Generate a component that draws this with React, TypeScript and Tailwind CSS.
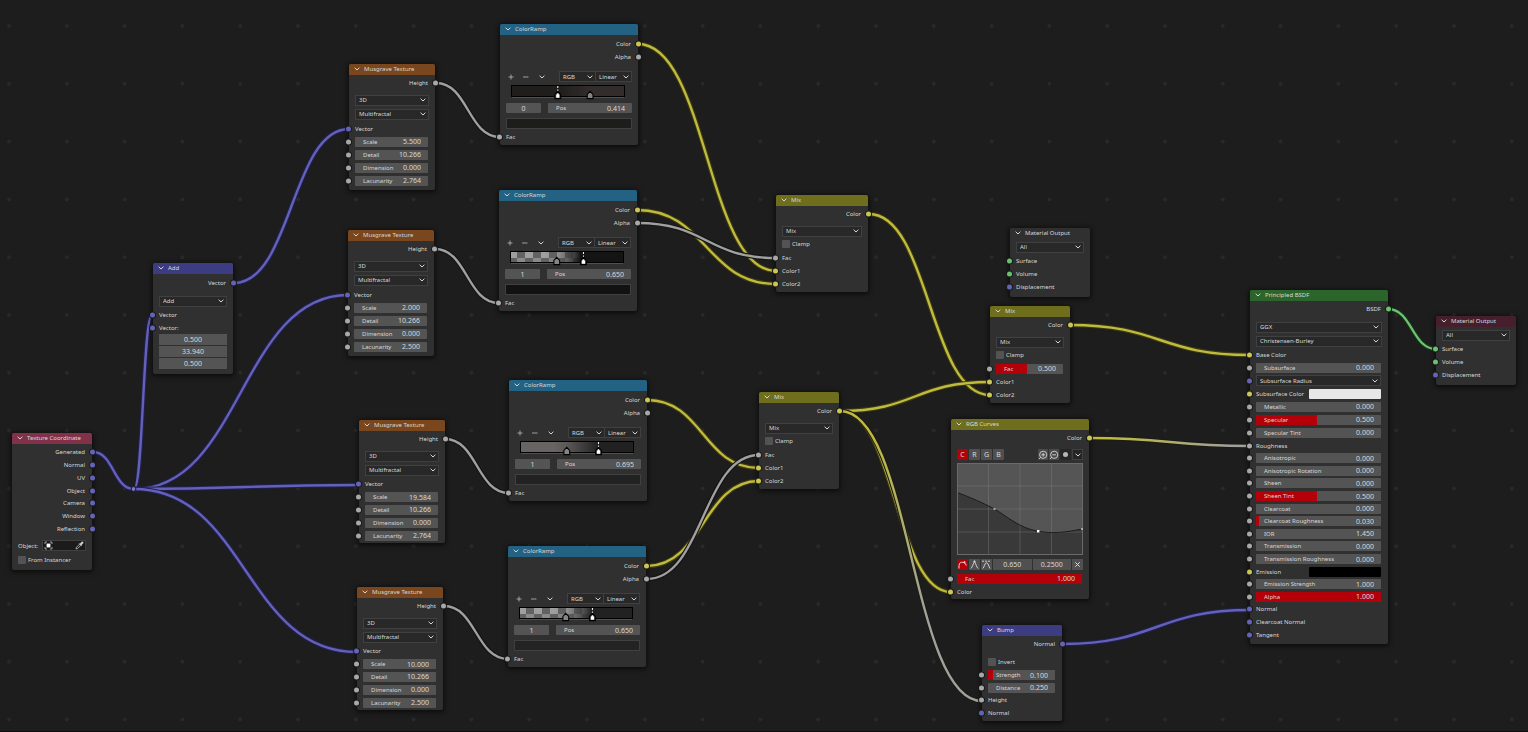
import { useId, type ReactNode } from "react";
import clsx from "clsx";

const SOCKET = {
  vector: "bg-[#6563b8]",
  value: "bg-[#a8a8a8]",
  color: "bg-[#cbc653]",
  shader: "bg-[#6ac06e]",
};

const HEADER = {
  input: "bg-[#83314a]",
  vector: "bg-[#3c3c83]",
  texture: "bg-[#79461d]",
  converter: "bg-[#246283]",
  color: "bg-[#6e6e1d]",
  shader: "bg-[#2b652b]",
  output: "bg-[#45202c]",
  none: "bg-[#303030]",
};

type SocketType = keyof typeof SOCKET;

const Chevron = ({ className }: { className?: string }) => (
  <svg viewBox="0 0 6 4" className={clsx("h-1 w-1.5 shrink-0", className)} fill="none" stroke="#d6d6d6" strokeWidth="1">
    <path d="M0.6 0.7 3 3 5.4 0.7" />
  </svg>
);

const Socket = ({ type, side }: { type: SocketType; side: "left" | "right" }) => (
  <span
    className={clsx(
      "absolute top-1/2 size-[5px] -translate-y-1/2 rounded-full ring-1 ring-[#1a1a1a]",
      side === "left" ? "-left-[3px]" : "-right-[3px]",
      SOCKET[type]
    )}
  />
);

const Node = ({ title, kind, className, children }: { title: string; kind: keyof typeof HEADER; className: string; children: ReactNode }) => (
  <section className={clsx("absolute rounded-[2px] bg-[#303030] shadow-[0_1px_5px_1px_rgba(0,0,0,0.65)]", className)}>
    <header className={clsx("flex h-[11px] items-center gap-1 rounded-t-[2px] pb-px pl-[5px]", HEADER[kind])}>
      <Chevron />
      <h2>{title}</h2>
    </header>
    {children}
  </section>
);

// one line of a node, with an optional socket on its edge
const Row = ({ socket, out, children }: { socket?: SocketType; out?: boolean; children: ReactNode }) => (
  <div className={clsx("relative flex h-[13px] min-h-0 shrink items-center pr-[7px] pl-1.5", out && "justify-end")}>
    {socket && <Socket type={socket} side={out ? "right" : "left"} />}
    {children}
  </div>
);

const Output = ({ name, type }: { name: string; type: SocketType }) => (
  <Row socket={type} out>{name}</Row>
);

const Select = ({ label, value, className }: { label: string; value: string; className?: string }) => (
  <span className={clsx("relative flex h-[11px] items-center border border-[#404040] bg-[#282828]", className)}>
    <select aria-label={label} defaultValue={value} className="h-full w-full appearance-none bg-transparent pl-[3px] outline-none">
      <option>{value}</option>
    </select>
    <Chevron className="pointer-events-none absolute right-0.5" />
  </span>
);

const SelectRow = ({ label, value }: { label: string; value: string }) => (
  <div className="flex h-3.5 items-center pr-1.5 pl-1.5">
    <Select label={label} value={value} className="flex-1" />
  </div>
);

// slider style number field, fill goes from 0 to 1
const Slider = ({ name, value, fill = 0 }: { name: string; value: string; fill?: number }) => {
  const id = useId();
  return (
    <div className="relative flex h-[10px] min-w-0 flex-1 items-center overflow-hidden rounded-[1px] bg-[#545454] pr-[7px] pl-2">
      {fill > 0 && <span className="absolute inset-y-0 left-0 bg-[#b30009]" style={{ width: `${fill * 100}%` }} />}
      <label htmlFor={id} className="relative shrink-0">{name}</label>
      <input id={id} defaultValue={value} className="relative h-full w-0 min-w-0 flex-1 bg-transparent text-right text-[7px] outline-none" />
    </div>
  );
};

const SliderRow = ({ name, value, fill, socket = "value" }: { name: string; value: string; fill?: number; socket?: SocketType }) => (
  <Row socket={socket}>
    <Slider name={name} value={value} fill={fill} />
  </Row>
);

const CheckRow = ({ name }: { name: string }) => (
  <div className="flex h-3 items-center pl-1.5">
    <label className="flex items-center gap-0.5">
      <input type="checkbox" className="size-2 appearance-none rounded-[1px] bg-[#535353]" />
      {name}
    </label>
  </div>
);

const Musgrave = ({ className, values, compact }: { className: string; values: string[]; compact?: boolean }) => (
  <Node title="Musgrave Texture" kind="texture" className={clsx("w-[86px]", compact ? "pb-px" : "pb-[3px]", className)}>
    <div className="pt-px pb-1">
      <Output name="Height" type="value" />
    </div>
    <SelectRow label="Dimensions" value="3D" />
    <SelectRow label="Type" value="Multifractal" />
    <div className={clsx("flex flex-col pt-px", compact && "h-[65px]")}>
      <Row socket="vector">Vector</Row>
      {["Scale", "Detail", "Dimension", "Lacunarity"].map((name, i) => (
        <SliderRow key={name} name={name} value={values[i]} />
      ))}
    </div>
  </Node>
);

type Ramp = {
  id: string;
  index: string;
  pos: string;
  stops: [number, string, number][];
  checker?: boolean;
  handles: [number, boolean][];
  swatch: string;
};

const RampBar = ({ ramp }: { ramp: Ramp }) => (
  <svg width="114" height="15" className="block" aria-hidden="true">
    <defs>
      <pattern id={`${ramp.id}-check`} width="16" height="11" patternUnits="userSpaceOnUse">
        <rect width="16" height="11" fill="#626262" />
        <rect y="1" width="7" height="6" fill="#a09f9d" />
        <rect x="15" y="1" width="1" height="6" fill="#a09f9d" />
        <rect x="7" y="7" width="8" height="4" fill="#8a8988" />
      </pattern>
      <linearGradient id={`${ramp.id}-ramp`}>
        {ramp.stops.map(([offset, color, opacity]) => (
          <stop key={offset} offset={offset} stopColor={color} stopOpacity={opacity} />
        ))}
      </linearGradient>
    </defs>
    {ramp.checker && <rect x="1" y="1" width="112" height="10" fill={`url(#${ramp.id}-check)`} />}
    <rect x="0.5" y="0.5" width="113" height="11" fill={`url(#${ramp.id}-ramp)`} stroke="#000" />
    <path d="M1 12.5H113" stroke="#666" strokeWidth="0.6" />
    {ramp.handles.map(([at, active]) => (
      <g key={at} transform={`translate(${at * 113} 0)`}>
        {active && <path d="M0 1V7" stroke="#fff" strokeDasharray="2 1.5" />}
        <path d="M-2.9 13.6V9.4L0 6.4 2.9 9.4V13.6Z" fill={active ? "#4a4a4a" : "#858585"} stroke="#000" strokeWidth="1.1" />
        {active && <path d="M-1.6 12.8V10L0 8 1.6 10V12.8Z" fill="#fff" />}
      </g>
    ))}
  </svg>
);

const ColorRamp = ({ className, ramp }: { className: string; ramp: Ramp }) => (
  <Node title="ColorRamp" kind="converter" className={clsx("w-[138px] pb-0.5", className)}>
    <div className="pt-0.5">
      <Output name="Color" type="color" />
      <Output name="Alpha" type="value" />
    </div>
    <div className="mt-2 flex h-[11px] items-center pr-1.5 pl-2">
      <button aria-label="Add stop" className="flex h-full w-[7px] items-center">
        <svg width="6" height="6" stroke="#bbb" strokeWidth="0.8"><path d="M0.5 3H5.5M3 0.5V5.5" /></svg>
      </button>
      <button aria-label="Remove stop" className="ml-2 flex h-full w-[7px] items-center">
        <svg width="6" height="6" stroke="#bbb" strokeWidth="0.8"><path d="M0 3H5.5" /></svg>
      </button>
      <button aria-label="Tools" className="ml-[9px] flex h-full w-[7px] items-center">
        <Chevron />
      </button>
      <span className="flex flex-1 pl-[13px]">
        <Select label="Color mode" value="RGB" className="w-[37px]" />
        <Select label="Interpolation" value="Linear" className="flex-1 border-l-0" />
      </span>
    </div>
    <div className="pt-[3px] pl-[11px]">
      <RampBar ramp={ramp} />
    </div>
    <div className="mt-[3px] flex gap-[7px] pr-1.5 pl-1.5">
      <input aria-label="Stop index" defaultValue={ramp.index} className="h-[10px] w-[35px] rounded-[1px] bg-[#545454] text-center text-[7px] outline-none" />
      <Slider name="Pos" value={ramp.pos} />
    </div>
    <div className="mt-[5px] mb-px flex pr-1.5 pl-1.5">
      <button aria-label="Stop color" className={clsx("h-[11px] flex-1 border border-[#404040]", ramp.swatch)} />
    </div>
    <Row socket="value">Fac</Row>
  </Node>
);

const Mix = ({ className, fac }: { className: string; fac?: string }) => (
  <Node title="Mix" kind="color" className={clsx("pb-0.5", className)}>
    <div className="pt-px pb-1">
      <Output name="Color" type="color" />
    </div>
    <SelectRow label="Blend mode" value="Mix" />
    <CheckRow name="Clamp" />
    <div className="pt-px">
      {fac ? <SliderRow name="Fac" value={fac} fill={0.47} /> : <Row socket="value">Fac</Row>}
      <Row socket="color">Color1</Row>
      <Row socket="color">Color2</Row>
    </div>
  </Node>
);

const MaterialOutput = ({ className, kind }: { className: string; kind: "output" | "none" }) => (
  <Node title="Material Output" kind={kind} className={clsx("w-20 pb-1", className)}>
    <div className="pt-px">
      <SelectRow label="Target" value="All" />
    </div>
    <Row socket="shader">Surface</Row>
    <Row socket="shader">Volume</Row>
    <Row socket="vector">Displacement</Row>
  </Node>
);

const TextureCoordinate = () => (
  <Node title="Texture Coordinate" kind="input" className="top-[433px] left-3 w-20 pb-1">
    <div className="flex h-[91px] flex-col pt-0.5">
      {["Generated", "Normal", "UV", "Object", "Camera", "Window", "Reflection"].map((name) => (
        <Output key={name} name={name} type="vector" />
      ))}
    </div>
    <div className="mt-[5px] flex h-[11px] items-center justify-between pr-1.5 pl-1.5">
      <span>Object:</span>
      <button aria-label="Pick object" className="flex h-[11px] w-11 items-center justify-between border border-[#404040] bg-[#1b1b1b] px-px">
        <svg width="9" height="9" fill="none" stroke="#bdbdbd" strokeWidth="0.8">
          <path d="M1 3V1H3M6 1H8V3M8 6V8H6M3 8H1V6" />
          <rect x="2.6" y="2.6" width="3.8" height="3.8" fill="#fff" stroke="none" />
        </svg>
        <svg width="9" height="9" fill="none" stroke="#c8c8c8" strokeWidth="1">
          <path d="M1 8 1.5 6.3 4.6 3.2 5.8 4.4 2.7 7.5Z" strokeWidth="0.8" />
          <path d="M4.2 2.4 6.6 4.8" />
          <path d="M5.8 3.2 7.4 1.6" strokeWidth="2.2" strokeLinecap="round" />
        </svg>
      </button>
    </div>
    <div className="pt-[3px]">
      <CheckRow name="From Instancer" />
    </div>
  </Node>
);

const VectorAdd = () => (
  <Node title="Add" kind="vector" className="top-[263px] left-[153px] w-20 pb-[5px]">
    <div className="pt-0.5 pb-[5px]">
      <Output name="Vector" type="vector" />
    </div>
    <SelectRow label="Operation" value="Add" />
    <Row socket="vector">Vector</Row>
    <Row socket="vector">Vector:</Row>
    <div className="flex flex-col gap-px pr-1.5 pl-1.5">
      {["0.500", "33.940", "0.500"].map((value, i) => (
        <input key={i} aria-label={`Vector ${"XYZ"[i]}`} defaultValue={value} className="h-[11px] w-full bg-[#545454] text-center text-[7px] outline-none" />
      ))}
    </div>
  </Node>
);

const CurveGraph = () => (
  <svg width="126" height="92" className="block" aria-label="Curve">
    <rect width="126" height="92" fill="#555" />
    <path d="M0 29.5C13 34 26 40 37.5 46C48 52 62 65 81 68.3C94 70.5 110 69.5 126 65.8V92H0Z" fill="#393939" />
    <path d="M31.5 0V92M63 0V92M94.5 0V92M0 23H126M0 46H126M0 69H126" stroke="#888" strokeOpacity="0.35" fill="none" />
    <path d="M0 29.5C13 34 26 40 37.5 46C48 52 62 65 81 68.3C94 70.5 110 69.5 126 65.8" stroke="#1c1c1c" fill="none" />
    <rect x="0.5" y="0.5" width="125" height="91" fill="none" stroke="#6a6a6a" />
    <rect x="36.5" y="45" width="2" height="2" fill="#aaa" />
    <rect x="80" y="67" width="2.4" height="2.4" fill="#fff" />
    <rect x="124" y="65" width="2" height="2" fill="#aaa" />
  </svg>
);

const ZoomIcon = ({ plus }: { plus?: boolean }) => (
  <svg width="10" height="10" fill="none" stroke="#d8d8d8" strokeWidth="0.9">
    <circle cx="5.2" cy="4.8" r="3.6" />
    <path d="M3.3 4.8H7.1M2.6 7.4 1 9" />
    {plus && <path d="M5.2 2.9V6.7" />}
  </svg>
);

const RgbCurves = () => (
  <Node title="RGB Curves" kind="color" className="top-[419px] left-[951px] w-[138px] pb-px">
    <div className="pt-px pb-[5px]">
      <Output name="Color" type="color" />
    </div>
    <div className="flex justify-between pr-1.5 pl-1.5">
      <div className="flex h-[11px] gap-px">
        {["C", "R", "G", "B"].map((channel) => (
          <button key={channel} className={clsx("w-[11px] rounded-[1px] text-[7px] leading-none", channel === "C" ? "bg-[#b30009]" : "bg-[#505050]")}>
            {channel}
          </button>
        ))}
      </div>
      <div className="flex h-[11px] gap-px">
        <button aria-label="Zoom in" className="bg-[#4a4a4a]"><ZoomIcon plus /></button>
        <button aria-label="Zoom out" className="bg-[#4a4a4a]"><ZoomIcon /></button>
        <button aria-label="Clipping" className="flex w-[11px] items-center justify-center bg-[#252525]">
          <span className="size-[5px] rounded-full bg-[#b5b5b5]" />
        </button>
        <button aria-label="Curve tools" className="flex w-[11px] items-center justify-center border border-[#404040] bg-[#252525]"><Chevron /></button>
      </div>
    </div>
    <div className="pt-[3px] pl-1.5">
      <CurveGraph />
    </div>
    <div className="mt-1 mb-0.5 flex h-[11px] gap-px pr-1.5 pl-1.5">
      <button aria-label="Auto handle" className="w-[11px] rounded-l-[1px] bg-[#b30009]">
        <svg width="11" height="11" fill="none" stroke="#eee" strokeWidth="0.9"><path d="M2 9.5V6.5C2.5 3.5 4 3 5.5 3.4S8.5 3.5 9.3 6.5" /><circle cx="7.5" cy="3.2" r="0.7" /></svg>
      </button>
      <button aria-label="Vector handle" className="w-[11px] bg-[#505050]">
        <svg width="11" height="11" fill="none" stroke="#ddd" strokeWidth="0.9"><path d="M1.8 9.5C3.8 8 4 4.5 5.5 2.5C7 4.5 7.2 8 9.2 9.5" /><circle cx="5.5" cy="2.4" r="0.7" /></svg>
      </button>
      <button aria-label="Auto clamped handle" className="w-[11px] bg-[#505050]">
        <svg width="11" height="11" fill="none" stroke="#ddd" strokeWidth="0.9"><path d="M1 2.2H10" strokeDasharray="2 1" /><path d="M1.8 9.5C3.5 8 3.5 3.8 5.5 3.8S7.5 8 9.2 9.5" /></svg>
      </button>
      <input aria-label="Point X" defaultValue="0.650" className="w-0 flex-1 bg-[#505050] text-center text-[7px] outline-none" />
      <input aria-label="Point Y" defaultValue="0.2500" className="w-0 flex-1 bg-[#505050] text-center text-[7px] outline-none" />
      <button aria-label="Delete point" className="w-[11px] bg-[#505050]">
        <svg width="11" height="11" fill="none" stroke="#ddd" strokeWidth="1"><path d="M3.3 3.3 7.7 7.7M7.7 3.3 3.3 7.7" /></svg>
      </button>
    </div>
    <SliderRow name="Fac" value="1.000" fill={1} />
    <Row socket="color">Color</Row>
  </Node>
);

const Bump = () => (
  <Node title="Bump" kind="vector" className="top-[625px] left-[982px] w-20 pb-0.5">
    <div className="pt-px pb-1.5">
      <Output name="Normal" type="vector" />
    </div>
    <CheckRow name="Invert" />
    <div className="mt-px flex h-[50px] flex-col">
      <SliderRow name="Strength" value="0.100" fill={0.08} />
      <SliderRow name="Distance" value="0.250" />
      <Row socket="value">Height</Row>
      <Row socket="vector">Normal</Row>
    </div>
  </Node>
);

const ColorRow = ({ name, swatch }: { name: string; swatch: string }) => (
  <Row socket="color">
    <span className="flex-1">{name}</span>
    <button aria-label={name} className={clsx("h-[10px] w-[72px] rounded-[1px]", swatch)} />
  </Row>
);

const PrincipledBsdf = () => (
  <Node title="Principled BSDF" kind="shader" className="top-[290px] left-[1250px] w-[138px] pb-[3px]">
    <div className="pt-px pb-[5px]">
      <Output name="BSDF" type="shader" />
    </div>
    <SelectRow label="Distribution" value="GGX" />
    <SelectRow label="Subsurface method" value="Christensen-Burley" />
    <Row socket="color">Base Color</Row>
    <SliderRow name="Subsurface" value="0.000" />
    <Row socket="vector">
      <Select label="Subsurface Radius" value="Subsurface Radius" className="flex-1" />
    </Row>
    <ColorRow name="Subsurface Color" swatch="bg-[#e7e7e7]" />
    <SliderRow name="Metallic" value="0.000" />
    <SliderRow name="Specular" value="0.500" fill={0.49} />
    <SliderRow name="Specular Tint" value="0.000" />
    <Row socket="value">Roughness</Row>
    <div className="flex h-[189px] flex-col">
      <SliderRow name="Anisotropic" value="0.000" />
      <SliderRow name="Anisotropic Rotation" value="0.000" />
      <SliderRow name="Sheen" value="0.000" />
      <SliderRow name="Sheen Tint" value="0.500" fill={0.49} />
      <SliderRow name="Clearcoat" value="0.000" />
      <SliderRow name="Clearcoat Roughness" value="0.030" fill={0.02} />
      <SliderRow name="IOR" value="1.450" />
      <SliderRow name="Transmission" value="0.000" />
      <SliderRow name="Transmission Roughness" value="0.000" />
      <ColorRow name="Emission" swatch="bg-black" />
      <SliderRow name="Emission Strength" value="1.000" />
      <SliderRow name="Alpha" value="1.000" fill={1} />
      <Row socket="vector">Normal</Row>
      <Row socket="vector">Clearcoat Normal</Row>
      <Row socket="vector">Tangent</Row>
    </div>
  </Node>
);

const PURPLE = "#6461b8";
const GREY = "#a0a0a0";
const YELLOW = "#c0ba3e";

// x1, y1, x2, y2, stroke, outline
const wires: [number, number, number, number, string, string][] = [
  [93, 452, 134, 489, PURPLE, "#22204f"],
  [134, 489, 152, 315, PURPLE, "#22204f"],
  [134, 489, 348, 295, PURPLE, "#22204f"],
  [134, 489, 358, 485, PURPLE, "#22204f"],
  [134, 489, 357, 652, PURPLE, "#22204f"],
  [234, 283, 349, 129, PURPLE, "#22204f"],
  [436, 83, 500, 137, GREY, "#141414"],
  [435, 249, 499, 303, GREY, "#141414"],
  [445, 439, 509, 493, GREY, "#141414"],
  [444, 606, 508, 659, GREY, "#141414"],
  [638, 44, 776, 271, YELLOW, "#3b3a12"],
  [637, 210, 776, 284, YELLOW, "#3b3a12"],
  [637, 223, 776, 258, GREY, "#141414"],
  [647, 400, 759, 468, YELLOW, "#3b3a12"],
  [647, 566, 759, 481, YELLOW, "#3b3a12"],
  [647, 579, 759, 455, GREY, "#141414"],
  [869, 214, 990, 395, YELLOW, "#3b3a12"],
  [840, 411, 990, 382, YELLOW, "#3b3a12"],
  [840, 411, 951, 592, YELLOW, "#3b3a12"],
  [840, 411, 982, 701, "url(#mix-to-bump)", "#1c1c12"],
  [1070, 325, 1250, 355, YELLOW, "#3b3a12"],
  [1090, 438, 1250, 446, "url(#curves-to-roughness)", "#1c1c12"],
  [1063, 644, 1250, 610, PURPLE, "#22204f"],
  [1388, 309, 1436, 349, "#6fc274", "#163318"],
];

const wirePath = (x1: number, y1: number, x2: number, y2: number) => {
  const mid = (x1 + x2) / 2;
  return `M${x1} ${y1}C${mid} ${y1} ${mid} ${y2} ${x2} ${y2}`;
};

const GRID = 57.8;

const Wires = () => (
  <svg className="absolute inset-0 size-full" fill="none" aria-hidden="true">
    <defs>
      <linearGradient id="mix-to-bump" gradientUnits="userSpaceOnUse" x1="840" y1="411" x2="982" y2="701">
        <stop offset="0.1" stopColor={YELLOW} />
        <stop offset="0.7" stopColor={GREY} />
      </linearGradient>
      <linearGradient id="curves-to-roughness" gradientUnits="userSpaceOnUse" x1="1090" y1="438" x2="1250" y2="446">
        <stop offset="0.1" stopColor={YELLOW} />
        <stop offset="0.9" stopColor={GREY} />
      </linearGradient>
    </defs>
    {Array.from({ length: 13 * 27 }, (_, i) => (
      <circle key={i} cx={9 + (i % 27) * GRID} cy={26 + Math.floor(i / 27) * GRID} r="2" fill="#292929" />
    ))}
    {wires.map(([x1, y1, x2, y2, stroke, outline], i) => (
      <g key={i}>
        <path d={wirePath(x1, y1, x2, y2)} stroke={outline} strokeWidth="4.6" />
        <path d={wirePath(x1, y1, x2, y2)} stroke={stroke} strokeWidth="2.4" />
      </g>
    ))}
    <circle cx="133.5" cy="489" r="2.4" fill="#7a78cc" stroke="#1a1a1a" />
  </svg>
);

const ramps: Ramp[] = [
  { id: "r1", index: "0", pos: "0.414", stops: [[0.414, "#1f1e1c", 1], [0.7, "#332c2c", 1]], handles: [[0.7, false], [0.414, true]], swatch: "bg-[#1d1d1b]" },
  { id: "r2", index: "1", pos: "0.650", stops: [[0.3, "#555", 0], [0.414, "#555", 0.2], [0.62, "#141414", 1]], checker: true, handles: [[0.414, false], [0.65, true]], swatch: "bg-[#121212]" },
  { id: "r3", index: "1", pos: "0.695", stops: [[0.3, "#696464", 1], [0.414, "#5c5858", 1], [0.695, "#212121", 1]], handles: [[0.414, false], [0.695, true]], swatch: "bg-[#222222]" },
  { id: "r4", index: "1", pos: "0.650", stops: [[0.3, "#555", 0], [0.414, "#555", 0.2], [0.64, "#222", 1]], checker: true, handles: [[0.414, false], [0.65, true]], swatch: "bg-[#232323]" },
];

const App = () => {
  return (
    <main className="relative min-h-screen w-full overflow-hidden border-b border-[#120b0e] bg-[#1d1d1d] font-['Noto_Sans',sans-serif] text-[6px] leading-none text-[#d8d8d8]">
      <Wires />

      <TextureCoordinate />
      <VectorAdd />

      <Musgrave className="top-[64px] left-[349px]" values={["5.500", "10.266", "0.000", "2.764"]} />
      <Musgrave className="top-[230px] left-[348px]" values={["2.000", "10.266", "0.000", "2.500"]} />
      <Musgrave className="top-[420px] left-[359px]" values={["19.584", "10.266", "0.000", "2.764"]} compact />
      <Musgrave className="top-[587px] left-[357px]" values={["10.000", "10.266", "0.000", "2.500"]} compact />

      <ColorRamp className="top-[24px] left-[500px]" ramp={ramps[0]} />
      <ColorRamp className="top-[190px] left-[499px]" ramp={ramps[1]} />
      <ColorRamp className="top-[380px] left-[509px]" ramp={ramps[2]} />
      <ColorRamp className="top-[546px] left-[508px]" ramp={ramps[3]} />

      <Mix className="top-[195px] left-[776px] w-[92px]" />
      <Mix className="top-[392px] left-[759px] w-20" />
      <Mix className="top-[306px] left-[990px] w-20" fac="0.500" />

      <RgbCurves />
      <Bump />
      <PrincipledBsdf />
      <MaterialOutput className="top-[228px] left-[1010px]" kind="none" />
      <MaterialOutput className="top-[316px] left-[1436px]" kind="output" />
    </main>
  );
};

export default App;
